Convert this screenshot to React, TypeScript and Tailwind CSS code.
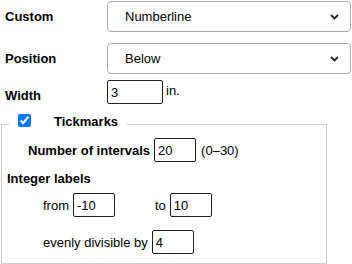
import React from "react";

function Chevron() {
  return (
    <svg width="9" height="6" viewBox="0 0 9 6" className="shrink-0">
      <path d="M1 1 L4.5 4.5 L8 1" fill="none" stroke="#222" strokeWidth="1.8" />
    </svg>
  );
}

function FakeSelect({ value }: { value: string }) {
  return (
    <div className="ml-auto mr-[1px] flex h-[31px] w-[244px] items-center rounded-[4px] border border-[#aaaaaa] bg-white pl-[17px] pr-[11px] text-[13px] text-black">
      <span className="flex-1">{value}</span>
      <Chevron />
    </div>
  );
}

function Box({ value, w }: { value: string; w: string }) {
  return (
    <input
      type="text"
      defaultValue={value}
      className={`${w} h-[24px] shrink-0 rounded-[2px] border border-[#1f1f1f] bg-white px-[3px] text-[13px] text-black outline-none`}
    />
  );
}

export default function App() {
  return (
    <div className="h-[264px] w-[352px] overflow-hidden bg-white font-['Liberation_Sans',Arial,sans-serif] text-[13px] leading-[15px] text-black">
      <div className="mt-[1px] flex h-[31px] items-center">
        <span className="ml-[5px] -mt-[1px] font-bold">Custom</span>
        <FakeSelect value="Numberline" />
      </div>
      <div className="mt-[11px] flex h-[31px] items-center">
        <span className="ml-[5px] font-bold">Position</span>
        <FakeSelect value="Below" />
      </div>
      <div className="mt-[6px] flex h-[24px]">
        <span className="ml-[5px] w-[102px] self-end mb-[1px] font-bold">Width</span>
        <Box value="3" w="w-[56px]" />
        <span className="ml-[3px] mt-[3px]">in.</span>
      </div>
      <fieldset className="ml-[1px] mt-[6px] w-[326px] border border-[#d0d0d0] pb-[9px]">
        <legend className="ml-[7px] flex h-[28px] items-start px-[9px]">
          <input type="checkbox" defaultChecked className="m-0 mt-[4px] h-[13px] w-[13px]" />
          <span className="ml-[23px] mt-[4px] font-bold">Tickmarks</span>
        </legend>
        <div className="flex h-[24px] items-center pl-[26px]">
          <span className="font-bold">Number of intervals</span>
          <span className="ml-[4px] flex">
            <Box value="20" w="w-[42px]" />
          </span>
          <span className="ml-[5px]">(0–30)</span>
        </div>
        <div className="mt-[9px] pl-[5px] font-bold">Integer labels</div>
        <div className="mt-[7px] flex h-[24px] items-center pl-[41px]">
          <span>from</span>
          <span className="ml-[4px] flex">
            <Box value="-10" w="w-[42px]" />
          </span>
          <span className="ml-[40px]">to</span>
          <span className="ml-[4px] flex">
            <Box value="10" w="w-[42px]" />
          </span>
        </div>
        <div className="mt-[13px] flex h-[24px] items-center pl-[41px]">
          <span>evenly divisible by</span>
          <span className="ml-[4px] flex">
            <Box value="4" w="w-[42px]" />
          </span>
        </div>
      </fieldset>
    </div>
  );
}
